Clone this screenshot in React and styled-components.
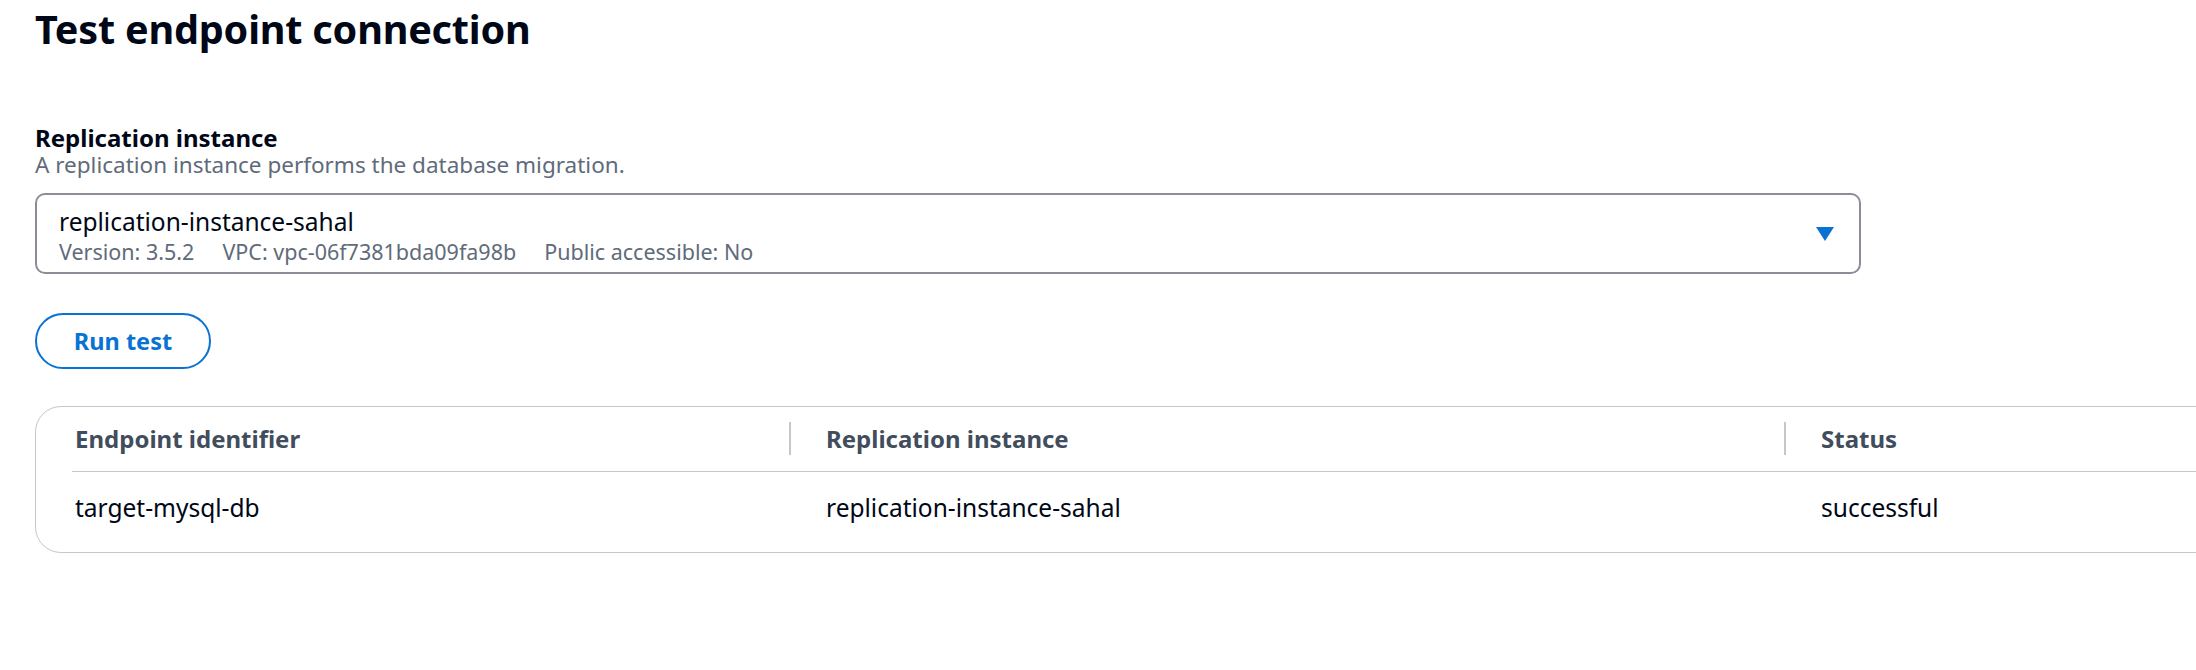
import React from "react";
import styled, { createGlobalStyle } from "styled-components";

const GlobalStyle = createGlobalStyle`
  html, body {
    margin: 0;
    padding: 0;
    background: #ffffff;
    overflow: hidden;
  }
  body {
    font-family: "Noto Sans", "Open Sans", "Liberation Sans", sans-serif;
    color: #000716;
  }
`;

const Page = styled.div`
  padding: 0 0 0 35px;
  width: 2400px;
  box-sizing: border-box;
`;

const Title = styled.h1`
  margin: 0;
  padding-top: 5px;
  font-size: 39.6px;
  line-height: 48px;
  font-weight: 700;
  color: #000716;
  letter-spacing: -0.2px;
`;

const Field = styled.div`
  margin-top: 70px;
  width: 1826px;
  display: flex;
  flex-direction: column;
`;

const Label = styled.div`
  font-size: 24px;
  line-height: 30px;
  font-weight: 700;
  color: #000716;
`;

const Description = styled.div`
  font-size: 22.5px;
  line-height: 24px;
  color: #5f6b7a;
`;

const SelectBox = styled.div`
  margin-top: 16px;
  border: 2px solid #8c8d96;
  border-radius: 10px;
  padding: 0 25px 0 22px;
  display: flex;
  align-items: center;
  justify-content: space-between;
  box-sizing: border-box;
  height: 81px;
`;

const SelectText = styled.div`
  display: flex;
  flex-direction: column;
  padding-top: 6px;
`;

const SelectMain = styled.div`
  font-size: 24.5px;
  line-height: 27px;
  color: #000716;
`;

const SelectMeta = styled.div`
  display: flex;
  gap: 28px;
  margin-top: 4px;
  font-size: 21.5px;
  line-height: 26px;
  color: #5f6b7a;
`;

const Caret = styled.svg`
  width: 18px;
  height: 14px;
  flex: none;
`;

const Button = styled.button`
  margin-top: 39px;
  width: 176px;
  height: 56px;
  border: 2px solid #0972d3;
  border-radius: 28px;
  background: #ffffff;
  color: #0972d3;
  font-family: inherit;
  font-size: 23.5px;
  font-weight: 700;
  padding: 0;
  display: flex;
  align-items: center;
  justify-content: center;
  cursor: pointer;
`;

const TableCard = styled.div`
  margin-top: 37px;
  border: 1px solid #c6c6cd;
  border-radius: 26px;
  padding: 0 0 0 36px;
  width: 2300px;
  box-sizing: border-box;
`;

const Row = styled.div`
  display: grid;
  grid-template-columns: 717px 995px 1fr;
  height: ${(p) => p.$h}px;
  border-bottom: ${(p) => (p.$last ? "none" : "1px solid #c6c6cd")};
`;

const Cell = styled.div`
  position: relative;
  padding-left: ${(p) => (p.$first ? 3 : 37)}px;
  padding-top: ${(p) => (p.$head ? 15 : 19)}px;
  font-size: ${(p) => (p.$head ? 24 : 24.5)}px;
  line-height: 33px;
  font-weight: ${(p) => (p.$head ? 700 : 400)};
  color: ${(p) => (p.$head ? "#414d5c" : "#000716")};
`;

const Divider = styled.span`
  position: absolute;
  left: 0;
  top: 15px;
  height: 33px;
  width: 2px;
  background: #c6c6cd;
`;

export default function App() {
  const cols = ["Endpoint identifier", "Replication instance", "Status"];
  const vals = ["target-mysql-db", "replication-instance-sahal", "successful"];
  return (
    <>
      <GlobalStyle />
      <Page>
        <Title>Test endpoint connection</Title>
        <Field>
          <Label>Replication instance</Label>
          <Description>A replication instance performs the database migration.</Description>
          <SelectBox>
            <SelectText>
              <SelectMain>replication-instance-sahal</SelectMain>
              <SelectMeta>
                <span>Version: 3.5.2</span>
                <span>VPC: vpc-06f7381bda09fa98b</span>
                <span>Public accessible: No</span>
              </SelectMeta>
            </SelectText>
            <Caret viewBox="0 0 18 14">
              <path d="M0 0 H18 L9 14 Z" fill="#0972d3" />
            </Caret>
          </SelectBox>
        </Field>
        <Button>Run test</Button>
        <TableCard>
          <Row $h={64}>
            {cols.map((c, i) => (
              <Cell key={c} $head $first={i === 0}>
                {i > 0 && <Divider />}
                {c}
              </Cell>
            ))}
          </Row>
          <Row $h={80} $last>
            {vals.map((v, i) => (
              <Cell key={v} $first={i === 0}>
                {v}
              </Cell>
            ))}
          </Row>
        </TableCard>
      </Page>
    </>
  );
}
